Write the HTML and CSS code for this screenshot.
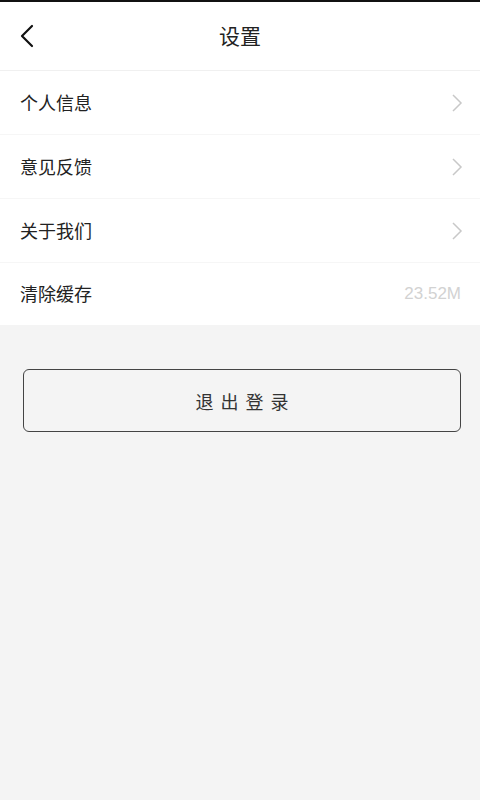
FILE: index.html
```html
<!DOCTYPE html>
<html lang="zh">
<head>
<meta charset="utf-8">
<title>设置</title>
<link rel="stylesheet" href="styles.css">
</head>
<body>
<div class="page">
  <header class="header">
    <span class="back">
      <svg width="16" height="24" viewBox="0 0 16 24"><path d="M13 2 L3 12 L13 22" fill="none" stroke="#111" stroke-width="2.2" stroke-linecap="round" stroke-linejoin="round"/></svg>
    </span>
    <h1 class="title">设置</h1>
  </header>
  <ul class="list">
    <li class="row"><span class="label">个人信息</span><svg class="chev" width="12" height="20" viewBox="0 0 12 20"><path d="M2 2 L10 10 L2 18" fill="none" stroke="#c8c8c8" stroke-width="1.5"/></svg></li>
    <li class="row"><span class="label">意见反馈</span><svg class="chev" width="12" height="20" viewBox="0 0 12 20"><path d="M2 2 L10 10 L2 18" fill="none" stroke="#c8c8c8" stroke-width="1.5"/></svg></li>
    <li class="row"><span class="label">关于我们</span><svg class="chev" width="12" height="20" viewBox="0 0 12 20"><path d="M2 2 L10 10 L2 18" fill="none" stroke="#c8c8c8" stroke-width="1.5"/></svg></li>
    <li class="row"><span class="label">清除缓存</span><span class="value">23.52M</span></li>
  </ul>
  <div class="actions">
    <button class="logout">退出登录</button>
  </div>
</div>
</body>
</html>
```
FILE: styles.css
```css
html, body {
  margin: 0;
  padding: 0;
}
body {
  background: #f4f4f4;
  font-family: "Noto Sans CJK SC", "Liberation Sans", sans-serif;
  color: #222;
}
.page {
  min-height: 800px;
  border-top: 2px solid #111;
  box-sizing: border-box;
}
.header {
  height: 68px;
  background: #fff;
  display: flex;
  align-items: center;
  justify-content: center;
  position: relative;
  border-bottom: 1px solid #f0f0f0;
}
.back {
  position: absolute;
  left: 19px;
  top: 22px;
  display: flex;
}
.title {
  margin: 0 0 2px;
  font-size: 21px;
  font-weight: normal;
  color: #222;
}
.list {
  list-style: none;
  margin: 0;
  padding: 0;
  background: #fff;
}
.row {
  height: 63px;
  display: flex;
  align-items: center;
  justify-content: space-between;
  padding: 0 17px 0 20px;
  border-bottom: 1px solid #f6f6f6;
  box-sizing: content-box;
}
.label {
  font-size: 18px;
  color: #222;
  margin-bottom: 2px;
}
.row:last-child {
  border-bottom: none;
  height: 62px;
}
.chev {
  display: block;
}
.value {
  font-family: "Liberation Sans", sans-serif;
  font-size: 17px;
  color: #d2d2d2;
  margin-right: 2px;
}
.actions {
  padding: 44px 19px 0 23px;
}
.logout {
  display: block;
  width: 100%;
  height: 63px;
  background: #f4f4f4;
  border: 1px solid #444;
  border-radius: 6px;
  font-family: "Noto Sans CJK SC", sans-serif;
  font-size: 18px;
  letter-spacing: 7px;
  text-indent: 7px;
  color: #333;
}
```
